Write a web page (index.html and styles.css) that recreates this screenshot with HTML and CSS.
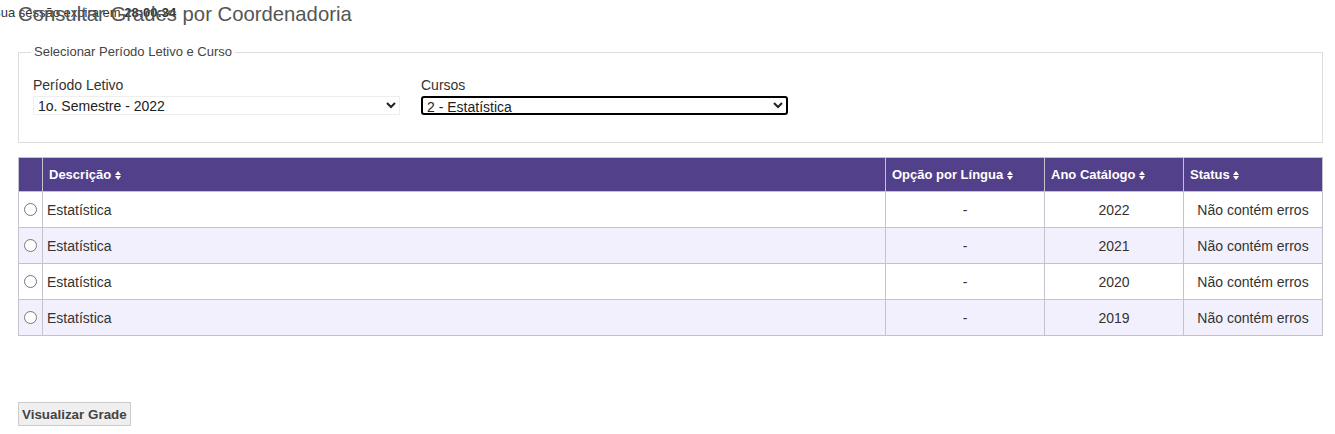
FILE: index.html
```html
<!DOCTYPE html>
<html>
<head>
<meta charset="utf-8">
<title>Consultar Grades por Coordenadoria</title>
<link rel="stylesheet" href="styles.css">
</head>
<body>
<div class="session">Sua sessão expira em <b>28:00:34</b></div>
<h1 class="title">Consultar Grades por Coordenadoria</h1>

<form id="grades" method="get" action=".">
  <fieldset class="filters">
    <legend>Selecionar Período Letivo e Curso</legend>
    <div class="field">
      <label for="periodo">Período Letivo</label>
      <select id="periodo" name="periodo">
        <option>1o. Semestre - 2022</option>
      </select>
    </div>
    <div class="field">
      <label for="curso">Cursos</label>
      <select id="curso" name="curso" class="focused">
        <option>2 - Estatística</option>
      </select>
    </div>
  </fieldset>

  <table class="list">
    <colgroup>
      <col class="pick">
      <col class="desc">
      <col class="lang">
      <col class="year">
      <col class="status">
    </colgroup>
    <thead>
      <tr>
        <th></th>
        <th>Descrição <span class="sort"></span></th>
        <th>Opção por Língua <span class="sort"></span></th>
        <th>Ano Catálogo <span class="sort"></span></th>
        <th>Status <span class="sort"></span></th>
      </tr>
    </thead>
    <tbody>
      <tr>
        <td class="c"><input type="radio" name="grade" value="2022"></td>
        <td>Estatística</td>
        <td class="c">-</td>
        <td class="c">2022</td>
        <td class="c">Não contém erros</td>
      </tr>
      <tr>
        <td class="c"><input type="radio" name="grade" value="2021"></td>
        <td>Estatística</td>
        <td class="c">-</td>
        <td class="c">2021</td>
        <td class="c">Não contém erros</td>
      </tr>
      <tr>
        <td class="c"><input type="radio" name="grade" value="2020"></td>
        <td>Estatística</td>
        <td class="c">-</td>
        <td class="c">2020</td>
        <td class="c">Não contém erros</td>
      </tr>
      <tr>
        <td class="c"><input type="radio" name="grade" value="2019"></td>
        <td>Estatística</td>
        <td class="c">-</td>
        <td class="c">2019</td>
        <td class="c">Não contém erros</td>
      </tr>
    </tbody>
  </table>

  <button type="submit" class="view">Visualizar Grade</button>
</form>
</body>
</html>
```

FILE: styles.css
```css
body { position: relative; margin: 0; padding: 0 12px 0 18px; font: 14px/18px "Liberation Sans", Arial, sans-serif; color: #333; background: #fff; }
.session { position: absolute; left: -8px; top: 5px; font-size: 13px; line-height: 16px; color: #333; white-space: nowrap; }
.session b { font-weight: bold; }
.title { position: relative; margin: 0; padding: 1px 0 0; font-size: 20.3px; font-weight: normal; line-height: 26px; color: #555; }

#grades { margin: 0; }
.filters { display: flex; gap: 21px; margin: 16px 0 14px; padding: 15px 14px 27px; border: 1px solid #ddd; }
.filters legend { margin-left: -2px; padding: 0 3px; font-size: 13px; color: #444; }
.field { display: flex; flex-direction: column; }
.field label { font-size: 14px; line-height: 18px; color: #333; margin-bottom: 2px; }
.field select { width: 367px; height: 19px; margin: 0; padding: 0; border: 1px solid #eee; border-radius: 0; background: #fff; font: 14px "Liberation Sans", Arial, sans-serif; color: #222; }
.field select.focused { border: 2px solid #000; border-radius: 3px; height: 19px; padding: 0; }

.list { table-layout: fixed; width: 100%; border-collapse: collapse; border: 1px solid #c4c2cc; }
.list col.pick { width: 24px; }
.list col.lang { width: 159px; }
.list col.year { width: 139px; }
.list col.status { width: 139px; }
.list th { height: 33px; padding: 0 6px; background: #52408a; color: #fff; font-size: 13px; font-weight: bold; text-align: left; border-left: 1px solid #c4c2cc; }
.list th:first-child { border-left: 0; }
.list td { height: 35px; padding: 0 4px; border: 1px solid #c4c2cc; font-size: 14px; color: #333; }
.list td.c { text-align: center; }
.list td:first-child { padding: 0; }
.list tbody tr:nth-child(even) td { background: #f2f0fc; }
.list input[type="radio"] { margin: 3px 0 0 0; width: 13px; height: 13px; }

.sort { display: inline-block; position: relative; width: 7px; height: 9px; vertical-align: -1px; }
.sort::before, .sort::after { content: ""; position: absolute; left: 0; border-left: 3.5px solid transparent; border-right: 3.5px solid transparent; }
.sort::before { top: 0; border-bottom: 4px solid #fff; }
.sort::after { bottom: 0; border-top: 4px solid #fff; }

.view { margin-top: 66px; height: 24px; padding: 0 3px; border: 1px solid #ccc; background: #efefef; font: bold 13.4px "Liberation Sans", Arial, sans-serif; color: #444; }
```
